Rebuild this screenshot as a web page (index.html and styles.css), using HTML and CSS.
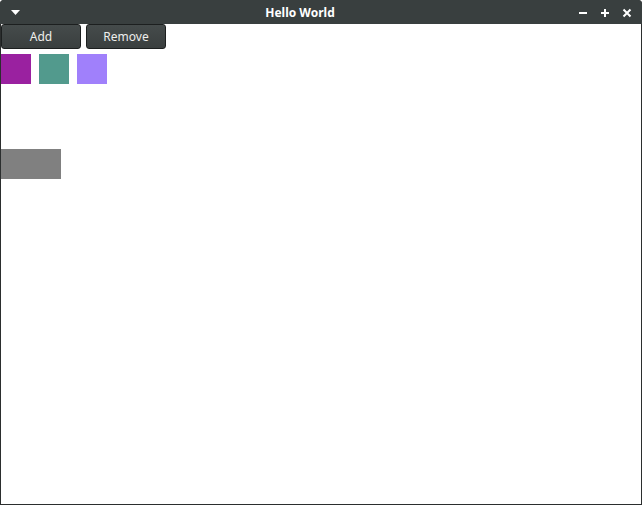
FILE: index.html
```html
<!DOCTYPE html>
<html lang="en">
  <head>
    <meta charset="UTF-8" />
    <title>Hello World</title>
    <link rel="stylesheet" href="styles.css">
  </head>
  <body>
    <div class="window">
      <header class="titlebar">
        <div class="menu">
          <svg width="9" height="5" viewBox="0 0 9 5"><path d="M0 0h9L4.5 5z" fill="#fff" /></svg>
        </div>
        <h1>Hello World</h1>
        <div class="controls">
          <svg width="10" height="10" viewBox="0 0 10 10"><path d="M1 5h8" stroke="#fff" stroke-width="2" /></svg>
          <svg width="10" height="10" viewBox="0 0 10 10"><path d="M1 5h8M5 1v8" stroke="#fff" stroke-width="2" /></svg>
          <svg width="10" height="10" viewBox="0 0 10 10"><path d="M1.5 1.5l7 7M8.5 1.5l-7 7" stroke="#fff" stroke-width="2" /></svg>
        </div>
      </header>
      <div class="content">
        <div class="toolbar">
          <button type="button">Add</button>
          <button type="button">Remove</button>
        </div>
        <div class="boxes">
          <div class="box" style="background-color: #9a21a0"></div>
          <div class="box" style="background-color: #529a8d"></div>
          <div class="box" style="background-color: #a080fb"></div>
        </div>
        <div class="bar"></div>
      </div>
    </div>
  </body>
</html>
```

FILE: styles.css
```css
:root {
  font-family: "Noto Sans", "Open Sans", sans-serif;
}

body {
  margin: 0;
  background-color: #fff;
}

.window {
  width: 642px;
  height: 505px;
  box-sizing: border-box;
  display: flex;
  flex-direction: column;
  border-radius: 4px 4px 0 0;
  overflow: hidden;
  background-color: #2b2e2e;
}

.titlebar {
  height: 24px;
  flex: none;
  display: flex;
  align-items: center;
  background-color: #393f3f;
  color: #fff;
}

.menu {
  width: 30px;
  display: flex;
  justify-content: center;
  padding-top: 1px;
}

.titlebar h1 {
  flex: 1;
  margin: 0;
  padding-top: 2px;
  text-align: center;
  font-size: 12px;
  font-weight: bold;
  line-height: 22px;
}

.controls {
  width: 72px;
  display: flex;
  gap: 12px;
  padding-left: 8px;
  padding-top: 1px;
  box-sizing: border-box;
}

.content {
  flex: 1;
  margin: 0 1px 1px;
  background-color: #fff;
}

.toolbar {
  display: flex;
  gap: 5px;
}

.toolbar button {
  width: 80px;
  height: 25px;
  padding: 0;
  border: 1px solid #1c1f1f;
  border-radius: 3px;
  background: linear-gradient(#454b4b, #3a3f3f);
  color: #eeeeec;
  font-family: inherit;
  font-size: 12px;
}

.boxes {
  display: flex;
  gap: 8px;
  margin-top: 5px;
}

.box {
  width: 30px;
  height: 30px;
}

.bar {
  width: 60px;
  height: 30px;
  margin-top: 65px;
  background-color: #808080;
}
```
